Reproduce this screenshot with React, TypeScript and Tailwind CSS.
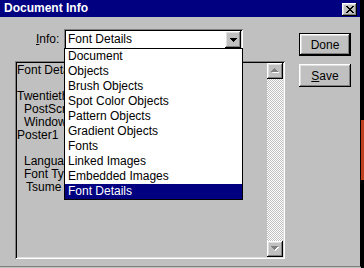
const raised =
  'shadow-[inset_-1px_-1px_#000,inset_1px_1px_#fff,inset_-2px_-2px_#808080,inset_2px_2px_#dfdfdf]';
const sunken =
  'shadow-[inset_1px_1px_#808080,inset_-1px_-1px_#fff,inset_2px_2px_#000,inset_-2px_-2px_#dfdfdf]';

const items = [
  'Document',
  'Objects',
  'Brush Objects',
  'Spot Color Objects',
  'Pattern Objects',
  'Gradient Objects',
  'Fonts',
  'Linked Images',
  'Embedded Images',
  'Font Details',
];

// only the part left of the dropped list is visible
const lines: { text: string; indent: string }[] = [
  { text: 'Font Details:', indent: 'pl-0' },
  { text: '', indent: 'pl-0' },
  { text: 'Twentieth Century Poster1', indent: 'pl-0' },
  { text: 'PostScript Name: TwentiethCenturyPoster1', indent: 'pl-[7px]' },
  { text: 'Windows Name: Twentieth Century', indent: 'pl-[7px]' },
  { text: 'Poster1', indent: 'pl-0' },
  { text: '', indent: 'pl-0' },
  { text: 'Language: Roman', indent: 'pl-[7px]' },
  { text: 'Font Type: Type 1', indent: 'pl-[7px]' },
  { text: 'Tsume Type: None', indent: 'pl-[9px]' },
];

const ScrollArrow = ({ up }: { up: boolean }) => (
  <div className={`w-[16px] h-[16px] bg-[#c0c0c0] flex items-center justify-center ${raised}`}>
    <svg width="8" height="6" viewBox="0 0 8 6">
      {up ? (
        <>
          <path d="M1 5h7v-1h-1v-1h-1v-1h-1v-1h-1z" fill="#fff" />
          <path d="M0 4h7v-1h-1v-1h-1v-1h-1v-1h-1v1h-1v1h-1v1h-1z" fill="#808080" />
        </>
      ) : (
        <>
          <path d="M1 1h7v1h-1v1h-1v1h-1v1h-1z" fill="#fff" />
          <path d="M0 0h7v1h-1v1h-1v1h-1v1h-1v-1h-1v-1h-1v-1h-1z" fill="#808080" />
        </>
      )}
    </svg>
  </div>
);

export default function App() {
  return (
    <div className="w-[364px] h-[268px] bg-[#c0c0c0] flex overflow-hidden font-['Liberation_Sans',Arial,sans-serif] text-[12px] text-black">
      <div className="w-[361px] h-[267px] flex flex-col border-r border-b border-r-black border-b-[#808080]">
        {/* title bar */}
        <div className="h-[17px] bg-[#000080] flex items-start justify-between pl-[4px] pr-[3px]">
          <span className="text-white font-bold text-[12px] leading-[17px]">Document Info</span>
          <div className={`mt-[3px] w-[15px] h-[13px] bg-[#c0c0c0] flex items-center justify-center ${raised}`}>
            <svg width="8" height="7" viewBox="0 0 8 7">
              <path
                d="M0 0h2v1h1v1h2v-1h1v-1h2v1h-1v1h-1v1h-1v1h1v1h1v1h1v1h-2v-1h-1v-1h-2v1h-1v1h-2v-1h1v-1h1v-1h1v-1h-1v-1h-1v-1h-1z"
                fill="#000"
              />
            </svg>
          </div>
        </div>

        {/* body */}
        <div className="relative flex-1 flex">
          <div className="flex flex-col w-[285px]">
            <div className="flex items-start mt-[12px]">
              <span className="ml-[36px] w-[28px] leading-[21px]">
                <span className="underline">I</span>nfo:
              </span>
              <div className={`w-[179px] h-[21px] bg-white flex items-center justify-between pl-[4px] pr-[2px] ${sunken}`}>
                <span className="leading-[15px]">Font Details</span>
                <div className={`w-[16px] h-[17px] bg-[#c0c0c0] flex items-center justify-center ${raised}`}>
                  <svg width="7" height="4" viewBox="0 0 7 4">
                    <path d="M0 0h7v1h-1v1h-1v1h-1v1h-1v-1h-1v-1h-1v-1h-1z" fill="#000" />
                  </svg>
                </div>
              </div>
            </div>

            <div className={`ml-[15px] mt-[11px] w-[270px] h-[198px] flex p-[2px] ${sunken}`}>
              <div className="flex-1">
                <div className="w-[47px] pt-[1px] overflow-hidden whitespace-nowrap leading-[13px]">
                  {lines.map((l, i) => (
                    <div key={i} className={`h-[13px] ${l.indent}`}>
                      {l.text}
                    </div>
                  ))}
                </div>
              </div>
              <div className="w-[16px] flex flex-col">
                <ScrollArrow up />
                <div className="flex-1 bg-[image:repeating-conic-gradient(#fff_0_25%,#c0c0c0_0_50%)] bg-[length:2px_2px]" />
                <ScrollArrow up={false} />
              </div>
            </div>
          </div>

          <div className="flex flex-col gap-[8px] ml-[14px] mt-[16px]">
            <button className="w-[52px] h-[23px] border border-black bg-[#c0c0c0] p-0">
              <div className={`w-full h-full flex items-center justify-center ${raised}`}>Done</div>
            </button>
            <button className={`w-[52px] h-[23px] bg-[#c0c0c0] flex items-center justify-center ${raised}`}>
              <span>
                <span className="underline">S</span>ave
              </span>
            </button>
          </div>

          {/* dropped list */}
          <div className="absolute left-[64px] top-[31px] w-[179px] border border-black bg-white flex flex-col">
            {items.map((it, i) => (
              <div
                key={it}
                className={`h-[15px] leading-[15px] pl-[3px] ${
                  i === items.length - 1 ? 'bg-[#000080] text-white' : ''
                }`}
              >
                {it}
              </div>
            ))}
          </div>
        </div>
      </div>
      <div className="w-[3px] h-full flex flex-col">
        <div className="h-[120px] bg-black" />
        <div className="h-[60px] bg-[#c04020]" />
        <div className="flex-1 bg-black" />
      </div>
    </div>
  );
}
